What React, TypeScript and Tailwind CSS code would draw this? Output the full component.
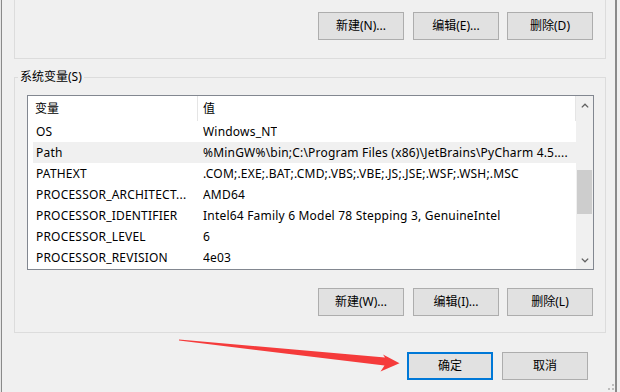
const rows: { name: string; value: string; selected?: boolean }[] = [
  { name: 'OS', value: 'Windows_NT' },
  { name: 'Path', value: '%MinGW%\\bin;C:\\Program Files (x86)\\JetBrains\\PyCharm 4.5....', selected: true },
  { name: 'PATHEXT', value: '.COM;.EXE;.BAT;.CMD;.VBS;.VBE;.JS;.JSE;.WSF;.WSH;.MSC' },
  { name: 'PROCESSOR_ARCHITECT...', value: 'AMD64' },
  { name: 'PROCESSOR_IDENTIFIER', value: 'Intel64 Family 6 Model 78 Stepping 3, GenuineIntel' },
  { name: 'PROCESSOR_LEVEL', value: '6' },
  { name: 'PROCESSOR_REVISION', value: '4e03' },
];

function WinButton({ label, focused, className }: { label: string; focused?: boolean; className?: string }) {
  return (
    <button
      type="button"
      className={`w-[86px] h-[28px] flex items-center justify-center bg-[#e1e1e1] text-[12px] text-black ${
        focused ? 'border-2 border-[#0078d7]' : 'border border-[#adadad]'
      } ${className ?? ''}`}
    >
      {label}
    </button>
  );
}

function Chevron({ down }: { down?: boolean }) {
  return (
    <svg width="8" height="5" viewBox="0 0 8 5" aria-hidden className={down ? 'rotate-180' : ''}>
      <polyline points="0.8,4.4 4,1.2 7.2,4.4" fill="none" stroke="#606060" strokeWidth="1.3" />
    </svg>
  );
}

export default function App() {
  return (
    <div
      className="relative w-[620px] h-[392px] bg-[#f0f0f0] overflow-hidden flex text-black"
      style={{ fontFamily: '"Noto Sans", "Noto Sans CJK SC", sans-serif' }}
    >
      <div className="w-px bg-[#e6e6e6]" />
      <div className="w-px bg-[#8a8a8a]" />

      <div className="w-[613px] pl-[12px] flex flex-col">
        {/* user vars group, scrolled off the top */}
        <div className="w-[592px] h-[59px] border-x border-b border-[#dcdcdc] pt-[12px] pr-[12px] flex justify-end">
          <WinButton label="新建(N)..." />
          <WinButton label="编辑(E)..." className="ml-[9px]" />
          <WinButton label="删除(D)" className="ml-[8px]" />
        </div>

        <div className="relative w-[592px] mt-[18px] border border-[#dcdcdc] pt-[17px] pl-[12px] pr-[11px] pb-[16px]">
          <span className="absolute -top-[9px] left-[3px] px-[2px] bg-[#f0f0f0] text-[12px] leading-[16px]">系统变量(S)</span>

          <div className="h-[175px] border border-[#828790] bg-white flex">
            <div className="w-[548px] flex flex-col">
              <div className="h-[25px] flex items-stretch text-[12px] border-r border-[#e5e5e5]">
                <div className="w-[169px] pl-[7px] flex items-center">变量</div>
                <div className="w-px bg-[#e5e5e5]" />
                <div className="pl-[5px] flex items-center">值</div>
              </div>
              {rows.map((r) => (
                <div
                  key={r.name}
                  className={`ml-[5px] h-[21px] flex items-center text-[12px] tracking-[0.2px] whitespace-nowrap overflow-hidden ${
                    r.selected ? 'bg-[#f0f0f0]' : ''
                  }`}
                >
                  <div className="w-[170px] shrink-0 pl-[3px] overflow-hidden">{r.name}</div>
                  <div className="overflow-hidden">{r.value}</div>
                </div>
              ))}
            </div>

            <div className="w-[17px] bg-[#f0f0f0] flex flex-col">
              <div className="h-[17px] flex items-center justify-center pt-[2px]">
                <Chevron />
              </div>
              <div className="flex-1 pt-[57px] pl-px">
                <div className="w-[15px] h-[44px] bg-[#cdcdcd]" />
              </div>
              <div className="h-[17px] flex items-center justify-center">
                <Chevron down />
              </div>
            </div>
          </div>

          <div className="mt-[18px] pr-px flex justify-end">
            <WinButton label="新建(W)..." />
            <WinButton label="编辑(I)..." className="ml-[9px] border-[#7a9cc4]" />
            <WinButton label="删除(L)" className="ml-[8px]" />
          </div>
        </div>

        <div className="mt-[19px] pr-[27px] flex justify-end">
          <WinButton label="确定" focused />
          <WinButton label="取消" className="ml-[9px]" />
        </div>
      </div>

      <div className="w-[2px] bg-[#8a8a8a]" />
      <div className="flex-1 bg-[#f0f0f0]" />

      {/* annotation arrow drawn over the dialog */}
      <svg className="absolute inset-0 pointer-events-none" width="620" height="392" aria-hidden>
        <polygon
          points="179,339.4 385,357.6 383,354.5 399.5,363.2 380.5,371.5 384.5,365.4 179,340.6"
          fill="#f53b3b"
        />
      </svg>

      {/* resize grip */}
      <div className="absolute left-[612px] top-[384px] w-[2px] h-[2px] bg-[#bdbdbd]" />
      <div className="absolute left-[608px] top-[388px] w-[2px] h-[2px] bg-[#bdbdbd]" />
      <div className="absolute left-[612px] top-[388px] w-[2px] h-[2px] bg-[#bdbdbd]" />
    </div>
  );
}
